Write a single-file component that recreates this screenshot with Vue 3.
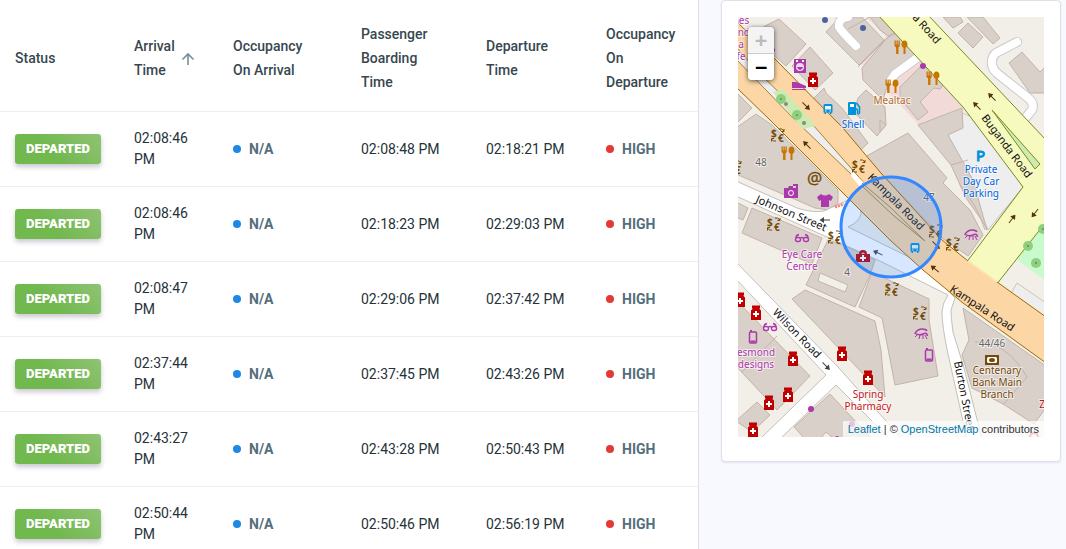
<script setup>
const rows = [
  { arrival: '02:08:46 PM', boarding: '02:08:48 PM', departure: '02:18:21 PM' },
  { arrival: '02:08:46 PM', boarding: '02:18:23 PM', departure: '02:29:03 PM' },
  { arrival: '02:08:47 PM', boarding: '02:29:06 PM', departure: '02:37:42 PM' },
  { arrival: '02:37:44 PM', boarding: '02:37:45 PM', departure: '02:43:26 PM' },
  { arrival: '02:43:27 PM', boarding: '02:43:28 PM', departure: '02:50:43 PM' },
  { arrival: '02:50:44 PM', boarding: '02:50:46 PM', departure: '02:56:19 PM' }
]

const buildings = [
  '779,19 806,44 786,66 752,36 765,26',
  '810,47 833,73 815,90 792,66',
  '824,88 826,93 842,108 868,143 860,151 812,100',
  '866,90 885,107 886,125 877,136 854,112 858,98',
  '840,17 826,32 859,65 884,40 862,17',
  '862,68 887,38 896,33 915,55 890,77 883,100 875,92 863,80',
  '870,17 880,30 888,36 896,32 884,17',
  '900,87 927,60 945,82 940,89 934,88 920,102 928,112 918,120 900,98',
  '918,125 962,108 963,128 948,135 973,180 987,230 983,222 966,198 951,165',
  '865,157 908,133 947,178 943,183 970,210 983,235 968,256 942,238 880,172',
  '943,17 953,28 963,22 960,17',
  '968,23 983,37 973,48 958,33',
  '967,17 983,17 1000,38 993,44',
  '1022,52 1040,72 1046,66 1046,93 1030,93 1009,63',
  '736,92 752,108 736,124',
  '736,128 756,114 772,125 838,190 838,203 828,210 815,208 736,174',
  '736,202 748,208 743,220 736,217',
  '752,208 822,238 812,264 742,233',
  '828,240 850,248 875,260 870,275 855,307 806,285',
  '805,290 792,299 885,397 881,350 875,321',
  '872,272 929,299 929,320 938,376 895,385 882,318 859,307',
  '963,308 1046,366 1046,408 1034,424 1003,404 972,388 962,355 969,340',
  '736,300 810,376 777,410 736,366',
  '757,402 770,415 752,432 736,421',
  '794,427 830,394 872,439 834,439 826,432 820,439 805,439',
  '880,120 886,125 880,132'
]

const pharmacies = [
  [813, 80], [740, 300], [756, 313], [793, 359], [842, 354], [868, 378], [788, 395], [769, 403], [753, 430]
]
const bureaus = [
  [778, 135], [859, 166], [774, 224], [835, 237], [735, 167], [936, 231], [953, 244], [892, 289], [920, 313]
]
const restaurants = [[901, 47], [933, 78], [892, 86], [788, 153]]
const arrows = [
  [806, 106, 45], [807, 145, 225], [992, 97, 225], [977, 106, 225], [1012, 219, -52], [1035, 213, 128],
  [825, 220, 180], [878, 253, 205], [935, 269, 220], [936, 245, 45], [826, 366, 45]
]
const trees = [[781, 99], [797, 115], [1028, 246], [1036, 263], [1043, 229]]
const streets = [
  { name: 'Kampala Road', x: 867, y: 178, a: 45 },
  { name: 'Kampala Road', x: 949, y: 291, a: 33 },
  { name: 'Buganda Road', x: 981, y: 118, a: 53 },
  { name: 'Buganda Road', x: 885, y: -12, a: 48 },
  { name: 'Johnson Street', x: 755, y: 202, a: 23 },
  { name: 'Wilson Road', x: 772, y: 313, a: 46 },
  { name: 'Burton Street', x: 954, y: 362, a: 79 }
]
const places = [
  { lines: ['Shell'], x: 853, y: 128, kind: 'blue' },
  { lines: ['Mealtac'], x: 892, y: 104, kind: 'orange' },
  { lines: ['Private', 'Day Car', 'Parking'], x: 981, y: 173, kind: 'blue' },
  { lines: ['Eye Care', 'Centre'], x: 802, y: 258, kind: 'purple' },
  { lines: ['Spring', 'Pharmacy'], x: 868, y: 398, kind: 'red' },
  { lines: ['Centenary', 'Bank Main', 'Branch'], x: 997, y: 374, kind: 'brown' },
  { lines: ['esmond', 'designs'], x: 756, y: 356, kind: 'purple' },
  { lines: ['nes', 'and', 'a', 'fe'], x: 741, y: 24, kind: 'purple' },
  { lines: ['48'], x: 761, y: 166, kind: 'grey' },
  { lines: ['47'], x: 929, y: 201, kind: 'grey' },
  { lines: ['4'], x: 847, y: 276, kind: 'grey' },
  { lines: ['44/46'], x: 992, y: 347, kind: 'grey' },
  { lines: ['Z'], x: 1042, y: 408, kind: 'red' }
]
</script>

<template>
  <div class="page">
    <main class="panel">
      <table class="trips">
        <colgroup>
          <col class="c-status" /><col class="c-arrival" /><col class="c-occ" />
          <col class="c-board" /><col class="c-dep" /><col class="c-last" />
        </colgroup>
        <thead>
          <tr>
            <th scope="col">Status</th>
            <th scope="col">
              <button class="sort" type="button">
                <span>Arrival<br />Time</span>
                <svg width="14" height="14" viewBox="0 0 14 14" aria-hidden="true">
                  <path d="M7 14V3M1.500 8.500 7 3l5.500 5.500" fill="none" stroke="#78909c" stroke-width="1.600" />
                </svg>
              </button>
            </th>
            <th scope="col">Occupancy<br />On Arrival</th>
            <th scope="col">Passenger<br />Boarding<br />Time</th>
            <th scope="col">Departure<br />Time</th>
            <th scope="col">Occupancy<br />On<br />Departure</th>
          </tr>
        </thead>
        <tbody>
          <tr v-for="(r, i) in rows" :key="i">
            <td><span class="badge">DEPARTED</span></td>
            <td>{{ r.arrival }}</td>
            <td><span class="level na">N/A</span></td>
            <td>{{ r.boarding }}</td>
            <td>{{ r.departure }}</td>
            <td><span class="level high">HIGH</span></td>
          </tr>
        </tbody>
      </table>
    </main>

    <aside class="card">
      <div class="map">
        <svg class="tiles" viewBox="738 17 306 420" preserveAspectRatio="xMidYMid slice" role="img" aria-label="Street map">
          <defs>
            <g id="pharmacy">
              <path d="M-4-7.500h8v3h-8zM-3-4.500h6l2 2V7H-5v-9.500z" fill="#bf0000" />
              <path d="M-1-2h2v2h2v2h-2v2h-2V2h-2V0h2z" fill="#fff" />
            </g>
            <g id="restaurant" fill="#c77400">
              <path d="M-6.500-6.500h1.300v4h.7v-4h1.300v4h.7v-4h1.300v5.500l-1.300 1.500V7h-2.400V.5L-6.500-1z" />
              <path d="M3.500-6.500c2 0 3 2 3 4 0 1.500-.8 2.800-2 3.300V7h-2V.8C1.300.3.500-1 .5-2.500c0-2 1-4 3-4z" />
            </g>
            <g id="bureau" class="bureau">
              <text x="-7" y="2">$</text>
              <text x="0" y="7">€</text>
              <path d="M1-6q3-1 5 2M6-6v2.500H3.500M-2 6q-3 1-4.500-2M-6.500 6.500V3.500H-4" fill="none" stroke="#734a08" />
            </g>
            <g id="bus">
              <path d="M-3-5h6q1.500 0 1.500 1.500V3.500h-1V5H2V3.500h-4V5h-1.500V3.500h-1v-7Q-4.500-5-3-5z" fill="#0092da" />
              <path d="M-3-3h6v3.500h-6zM-3 1.500h1.500v1H-3zM1.500 1.500H3v1H1.500z" fill="#eef4f4" />
            </g>
            <g id="glasses" fill="none" stroke="#ac39ac" stroke-width="1.400">
              <path d="M-6 0q0-3 3-3.500M6 0q0-3-3-3.500M-1.500 0q1.500-1 3 0" />
              <rect x="-6.500" y="-.5" width="5" height="4" rx="2" />
              <rect x="1.500" y="-.5" width="5" height="4" rx="2" />
            </g>
            <g id="phone">
              <rect x="-3.500" y="-5" width="7" height="11" rx="1" fill="none" stroke="#ac39ac" stroke-width="1.500" />
              <path d="M-3-7h2v2h-2zM-2.500 3.500h5v2h-5z" fill="#ac39ac" />
            </g>
            <g id="lash" fill="none" stroke="#ac39ac">
              <path d="M-6-1Q-3-5 1-5T6-3M-6.500-1Q-2 2 2 0T6.500 2" stroke-width="1.500" />
              <path d="M-4 1l-2 2M-1 1l-1 4M2 1v4M4 1l2 4" />
            </g>
            <path id="arrow" d="M-5-.5H1V-3L5.500 0 1 3V.5h-6z" />
          </defs>

          <rect x="738" y="17" width="306" height="420" fill="#f2efe9" />
          <path class="pink" d="M866 17h14l53 35 30 55-44 18-57-61 24-28z" />
          <path class="lot" d="M948 135l-3-12 17-10 13 5 48 69-35 43z" />
          <path class="lot" d="M1017 283l29 20v20l-36-28z" />
          <path class="park" d="M1046 216l-30 43 30 22z" />
          <polygon v-for="(b, i) in buildings" :key="'b' + i" class="building" :points="b" />
          <path class="hole" d="M820 273l28 12-3 7-27-11z" />
          <path class="seam" d="M975 342q30-2 52 35l-24 28M742 372l35-36M858 67l31-31M848 29l22-12M985 230q-8-25-25-45M951 165l17-5M1015 150q10 20 8 37" />

          <g class="casing">
            <path d="M848 17q-10 1-9 10 2 4 17 19" />
            <path d="M917 58l-22 16-4 6" />
            <path d="M1017 42l-21 11q-5 4-4 12 1 5 6 9l29 23q8 6 5 13l-9 11" />
          </g>
          <g class="service">
            <path d="M848 17q-10 1-9 10 2 4 17 19" />
            <path d="M917 58l-22 16-4 6" />
            <path d="M1017 42l-21 11q-5 4-4 12 1 5 6 9l29 23q8 6 5 13l-9 11" />
          </g>

          <path class="minor" d="M736 262l102 105 64 72h-12l-54-54-56 54h-20l66-64L736 279z" />
          <path class="minor" d="M736 181l61 27q15 5 27 3l24-11q14 4 13 14-2 8-13 13l69 34 8 4 30 33-4 12q0 8 2 22l11 36 18 71h-15l-19-85q-6-28-6-42 0-8 6-17l-66-33-44-20-102-46z" />

          <path class="secondary" d="M878 15l85 92 60 80-57 76 30 22 50-63v-82L928 15z" />
          <path d="M992 110l48 54-5 5z" class="median" />
          <path class="primary" d="M736 21l37 36 70 71 37 44 62 68 26 21 29 21 49 35v46l-83-60-40-33-33-30-42-42-78-78-34-33z" />
          <path d="M968 261l29 21" stroke="#f9e8b2" stroke-width="2" />
          <path d="M736 47l24 27 53 51 52 59-13-9-57-55-59-61z" fill="#eeeef0" stroke="#a8842a" />
          <path d="M773 92l10-3 33 37-14 3z" fill="#cdebb0" />
          <path d="M852 171l14 14-4 4-11-13z" fill="#fff" />
          <path d="M862 183l28 24 35 34-31-25-32-30" fill="none" stroke="#a68b3c" />

          <g v-for="(t, i) in trees" :key="'t' + i">
            <circle :cx="t[0]" :cy="t[1]" r="5" fill="#8fcf80" />
            <circle :cx="t[0]" :cy="t[1]" r="1" fill="#6b8d51" />
          </g>
          <circle cx="786" cy="104" r="2" fill="#888" /><circle cx="804" cy="123" r="2" fill="#888" />
          <circle cx="825" cy="20" r="3" fill="#4863a0" /><circle cx="863" cy="28" r="3" fill="#4863a0" />
          <circle class="shop" cx="923" cy="66" r="3" /><circle class="shop" cx="811" cy="409" r="3" />
          <circle class="shop" cx="852" cy="424" r="3" /><circle class="shop" cx="773" cy="50" r="2" />
          <circle class="shop" cx="837" cy="438" r="2" />
          <circle cx="1034" cy="437" r="4" fill="none" stroke="#d44" stroke-width="2" />
          <path d="M835 207l9-3" stroke="#fa8072" stroke-width="3" stroke-dasharray="2 1" />

          <use v-for="(a, i) in arrows" :key="'a' + i" href="#arrow" :fill="i > 5 && i !== 8 && i !== 9 ? '#444' : '#50340a'" :transform="`translate(${a[0]} ${a[1]}) rotate(${a[2]})`" />
          <use v-for="(p, i) in pharmacies" :key="'p' + i" href="#pharmacy" :x="p[0]" :y="p[1]" />
          <use v-for="(p, i) in bureaus" :key="'u' + i" href="#bureau" :x="p[0]" :y="p[1]" />
          <use v-for="(p, i) in restaurants" :key="'r' + i" href="#restaurant" :x="p[0]" :y="p[1]" />
          <use href="#bus" x="828" y="109" /><use href="#bus" x="915" y="248" />
          <use href="#glasses" x="802" y="238" /><use href="#glasses" x="770" y="327" />
          <use href="#phone" x="753" y="337" /><use href="#phone" x="929" y="355" />
          <use href="#lash" x="971" y="235" /><use href="#lash" x="921" y="334" />

          <path d="M794 59h12v14h-12z" fill="#ac39ac" />
          <circle cx="800" cy="67" r="4" fill="#efd9ef" /><path d="M797 67h6q-1 3-3 3t-3-3z" fill="#ac39ac" />
          <path d="M796 60h2v2h-2zM802 60h2v2h-2z" fill="#fff" />
          <path d="M792 82h4l3 1 7 3v2h-14zM792 89h14v1h-14z" fill="#ac39ac" />
          <path d="M848 103q0-1 1-1h6q1 0 1 1v12h-8z" fill="#0092da" />
          <path d="M856 109q2 0 1.500 4 1 2 2 0v-6l-3-4" fill="none" stroke="#0092da" stroke-width="1.500" />
          <path d="M850 104h4v3h-4z" fill="#fff" />
          <path d="M784 188h4l1-2h4v2h5v10h-14zM793 184h5v4h-2v-2h-3z" fill="#ac39ac" />
          <circle cx="791" cy="193" r="2.500" fill="none" stroke="#fff" />
          <path d="M821 194q4 3 8 0l4 3-2 4-2-1v7h-8v-7l-2 1-2-4z" fill="#ac39ac" />
          <path d="M856 254h3q0-4 4-4t4 4h3v8h-14zM861 254h4q-2-3-4 0z" fill="#bf0000" />
          <path d="M862 255h2v2h2v2h-2v2h-2v-2h-2v-2h2z" fill="#fff" />
          <path d="M985 355h14v10h-14z" fill="#734a08" />
          <path d="M988 357h8l1 1v4l-1 1h-8l-1-1v-4z" fill="#fff" /><ellipse cx="992" cy="360" rx="3" ry="2" fill="#734a08" />
          <text x="807" y="184" class="at">@</text>
          <text x="976" y="161" class="parking">P</text>

          <text v-for="(s, i) in streets" :key="'s' + i" class="street" :transform="`translate(${s.x} ${s.y}) rotate(${s.a})`">{{ s.name }}</text>
          <template v-for="(p, i) in places" :key="'l' + i">
            <text v-for="(l, j) in p.lines" :key="j" class="place" :class="p.kind" :x="p.x" :y="p.y + j * 12">{{ l }}</text>
          </template>
          <circle cx="891" cy="227" r="50" fill="#3388ff" fill-opacity=".2" stroke="#3388ff" stroke-width="3" />
        </svg>
        <div class="zoom">
          <button type="button" disabled aria-label="Zoom in">+</button>
          <button type="button" aria-label="Zoom out">−</button>
        </div>
        <div class="credit"><a href="#leaflet">Leaflet</a> | © <a href="#osm">OpenStreetMap</a> contributors</div>
      </div>
    </aside>
  </div>
</template>

<style>
body { background: #f8f9ff; }
</style>

<style scoped>
.page {
  display: grid;
  grid-template-columns: minmax(0, 1fr) 340px;
  gap: 22px;
  align-items: start;
  height: 100vh;
  overflow: hidden;
  padding-right: 5px;
  box-sizing: border-box;
  font-family: Roboto, sans-serif;
  font-size: 14px;
  color: #263238;
}
.panel {
  min-height: 100vh;
  padding-top: 4px;
  background: #fff;
  border-right: 1px solid #e0e0e8;
  box-sizing: border-box;
}
.trips { width: 100%; table-layout: fixed; border-collapse: collapse; }
.c-status { width: 119px; }
.c-arrival { width: 99px; }
.c-occ { width: 128px; }
.c-board { width: 125px; }
.c-dep { width: 120px; }
.c-last { width: 107px; }
th, td { padding: 0 15px; text-align: left; vertical-align: middle; border-bottom: 1px solid #eceff1; }
th { height: 107px; line-height: 24px; font-weight: 500; color: #37474f; }
td { height: 74px; line-height: 21px; }
.sort {
  display: flex;
  align-items: center;
  gap: 6px;
  padding: 0;
  border: 0;
  background: none;
  font: inherit;
  color: inherit;
  text-align: left;
  cursor: pointer;
}
.badge {
  display: inline-block;
  padding: 0 11px;
  line-height: 30px;
  border-radius: 3px;
  background: linear-gradient(45deg, #71b84f 40%, #8fc373);
  box-shadow: 0 3px 5px rgba(60, 60, 90, 0.28);
  color: #fff;
  font-size: 13px;
  font-weight: 900;
}
.level { display: flex; align-items: center; gap: 8px; font-weight: 700; color: #546e7a; }
.level::before { content: ''; width: 8px; height: 8px; border-radius: 50%; background: #1e88e5; }
.high::before { background: #e53935; }
.card {
  padding: 16px 16px 24px;
  background: #fff;
  border: 1px solid #e0e0e8;
  border-radius: 4px;
  box-shadow: 0 1px 2px rgba(60, 60, 90, 0.1);
  box-sizing: border-box;
}
.map { position: relative; height: 420px; overflow: hidden; }
.tiles { display: block; width: 100%; height: 100%; }
.building { fill: #d9d0c9; stroke: #c4b3a9; }
.hole { fill: #f2efe9; stroke: #c4b3a9; }
.seam { fill: none; stroke: #c4b3a9; }
.pink { fill: #f2dad9; }
.lot { fill: #eee; stroke: #ccc4bd; }
.park { fill: #c8facc; }
.minor { fill: #fff; stroke: #c4c0bb; }
.casing path { fill: none; stroke: #ccc; stroke-width: 10; stroke-linecap: round; }
.service path { fill: none; stroke: #fff; stroke-width: 8; stroke-linecap: round; }
.secondary { fill: #f7fabf; stroke: #7c891e; }
.median { fill: #cdebb0; stroke: #7c891e; }
.primary { fill: #fcd6a4; stroke: #a06b00; }
.shop { fill: #ac39ac; }
.bureau text { font: 700 10px 'Noto Sans', sans-serif; fill: #734a08; }
.at { font: 17px 'Noto Sans', sans-serif; fill: #734a08; stroke: #734a08; stroke-width: 0.3px; }
.parking { font: 15px 'Noto Sans', sans-serif; fill: #0092da; stroke: #0092da; }
.street, .place {
  font-family: 'Noto Sans', sans-serif;
  paint-order: stroke;
  stroke: rgba(255, 255, 255, 0.6);
  stroke-width: 2px;
}
.street { font-size: 11px; fill: #111; stroke: none; }
.place { font-size: 10px; text-anchor: middle; }
.blue { fill: #0066e0; }
.orange { fill: #b36b1e; }
.purple { fill: #ac39ac; }
.red { fill: #c4161c; }
.brown { fill: #734a08; }
.grey { fill: #666; }
.zoom {
  position: absolute;
  top: 10px;
  left: 10px;
  display: flex;
  flex-direction: column;
  width: 26px;
  border-radius: 4px;
  overflow: hidden;
  box-shadow: 0 1px 5px rgba(0, 0, 0, 0.65);
}
.zoom button {
  height: 26px;
  padding: 0;
  border: 0;
  background: #fff;
  color: #000;
  font: bold 20px/26px 'DejaVu Sans Mono', monospace;
}
.zoom button:disabled { height: 27px; background: #f4f4f4; color: #bbb; border-bottom: 1px solid #ccc; }
.credit {
  position: absolute;
  right: 0;
  bottom: 0;
  padding: 0 5px;
  background: rgba(255, 255, 255, 0.7);
  color: #333;
  font: 11px/16px 'Liberation Sans', Arial, sans-serif;
  white-space: nowrap;
}
.credit a { color: #0078a8; text-decoration: none; }
</style>
